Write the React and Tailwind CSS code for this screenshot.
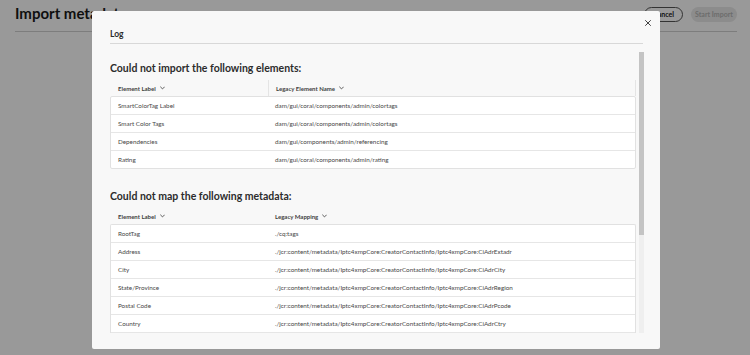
import React from "react";

const font = { fontFamily: "Lato, 'Open Sans', sans-serif" };

function Chevron() {
  return (
    <svg width="5" height="4" viewBox="0 0 5 4" className="ml-[4px] shrink-0">
      <path d="M0.6 1 L2.5 2.9 L4.4 1" fill="none" stroke="#4b4b4b" strokeWidth="0.9" strokeLinecap="round" strokeLinejoin="round" />
    </svg>
  );
}

function Table({ heading, col1, col2, rows, divider, open }) {
  return (
    <div>
      <div className="h-[16px] leading-[16px] text-[10.5px] font-bold text-[#2c2c2c]">{heading}</div>
      <div className="mt-[4px] flex h-[16px] items-center text-[6px] font-bold text-[#3f3f3f]">
        <div className="flex w-[158px] items-center pl-[8px]">
          {col1}
          <Chevron />
        </div>
        <div className={`flex h-full flex-1 items-center pl-[7px] ${divider ? "border-l border-r border-[#e4e4e4]" : ""}`}>
          {col2}
          <Chevron />
        </div>
      </div>
      <div className={`rounded-[2px] border border-[#e1e1e1] bg-white ${open ? "rounded-b-none border-b-0" : ""}`}>
        {rows.map((r, i) => {
          const last = i === rows.length - 1 && !open;
          return (
            <div
              key={i}
              className={`flex items-center text-[6.3px] text-[#474747] ${last ? "h-[17px]" : "h-[18px] border-b border-[#e6e6e6]"}`}
            >
              <div className="w-[157px] pl-[7px]">{r[0]}</div>
              <div className="flex-1 pl-[7px] whitespace-nowrap">{r[1]}</div>
            </div>
          );
        })}
      </div>
    </div>
  );
}

export default function App() {
  const rows1 = [
    ["SmartColorTag Label", "dam/gui/coral/components/admin/colortags"],
    ["Smart Color Tags", "dam/gui/coral/components/admin/colortags"],
    ["Dependencies", "dam/gui/components/admin/referencing"],
    ["Rating", "dam/gui/coral/components/admin/rating"],
  ];
  const p = "./jcr:content/metadata/Iptc4xmpCore:CreatorContactInfo/Iptc4xmpCore:";
  const rows2 = [
    ["RootTag", "./cq:tags"],
    ["Address", p + "CiAdrExtadr"],
    ["City", p + "CiAdrCity"],
    ["State/Province", p + "CiAdrRegion"],
    ["Postal Code", p + "CiAdrPcode"],
    ["Country", p + "CiAdrCtry"],
  ];
  return (
    <div className="relative h-[355px] w-[750px] overflow-hidden bg-white" style={font}>
      {/* background page */}
      <div className="mx-[13px] ml-[15px] flex h-[32px] items-center justify-between border-b border-[#d0d0d0]">
        <div className="text-[15px] font-bold text-[#1a1a1a] -mt-[4px]">Import metadata</div>
        <div className="flex items-center gap-[8px] -mt-[3px]">
          <div className="flex h-[15px] items-center rounded-full border border-[#555] px-[8px] text-[7px] font-bold text-[#222]">Cancel</div>
          <div className="flex h-[15px] w-[46px] items-center justify-center rounded-full bg-[#e9e9e9] text-[7px] font-bold text-[#b5b5b5]">Start Import</div>
        </div>
      </div>

      {/* overlay */}
      <div className="absolute inset-0 bg-black/40 pl-[92px] pt-[11px]">
        <div className="relative flex h-[338px] w-[568px] flex-col rounded-[2px] bg-[#f8f8f8] pl-[18px] pr-[16px] pt-[17px] pb-[16px]">
          <button className="absolute right-[9px] top-[9px] flex h-[6px] w-[6px] items-center justify-center">
            <svg width="6" height="6" viewBox="0 0 6 6">
              <path d="M0.5 0.5 L5.5 5.5 M5.5 0.5 L0.5 5.5" stroke="#2c2c2c" strokeWidth="0.9" strokeLinecap="round" />
            </svg>
          </button>
          <div className="mr-[1px] border-b border-[#d8d8d8] pb-[3px]">
            <div className="h-[12px] leading-[12px] text-[8.5px] font-bold text-[#2c2c2c]">Log</div>
          </div>
          <div className="mt-[8px] flex h-[281px] min-h-0">
            <div className="w-[526px] overflow-hidden pt-[8px]">
              <Table heading="Could not import the following elements:" col1="Element Label" col2="Legacy Element Name" rows={rows1} divider />
              <div className="h-[19px]" />
              <Table heading="Could not map the following metadata:" col1="Element Label" col2="Legacy Mapping" rows={rows2} open />
            </div>
            <div className="ml-[3px] flex w-[5px] flex-col">
              <div className="h-[183px] bg-[#c4c4c4]" />
              <div className="flex-1 bg-[#efefef]" />
            </div>
          </div>
        </div>
      </div>
    </div>
  );
}
